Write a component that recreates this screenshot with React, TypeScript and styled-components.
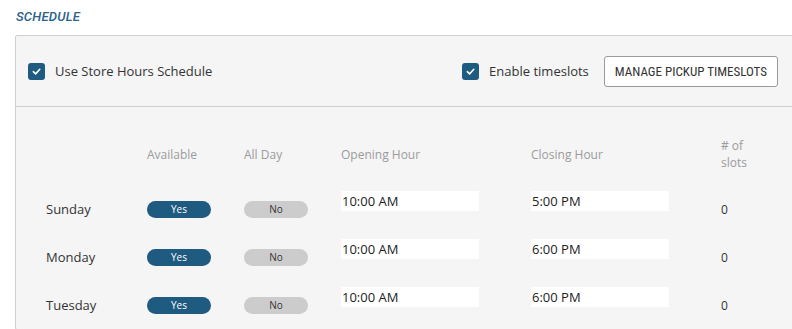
import styled, { createGlobalStyle } from 'styled-components';

const GlobalStyle = createGlobalStyle`
	body {
		margin: 0;
		background: #ffffff;
		font-family: 'Open Sans', 'Noto Sans', sans-serif;
		color: #333333;
	}
`;

const Page = styled.div`
	width: 792px;
	height: 329px;
	overflow: hidden;
	padding: 9px 0 0 15px;
	box-sizing: border-box;
`;

const SectionTitle = styled.h2`
	margin: 0 0 11px 1px;
	font-family: Roboto, 'Liberation Sans', sans-serif;
	font-size: 13px;
	font-weight: 500;
	font-style: italic;
	letter-spacing: 0.2px;
	line-height: 15px;
	color: #2a6289;
`;

const Panel = styled.div`
	width: 800px;
	background: #f5f5f5;
	border: 1px solid #cfcfcf;
	border-radius: 2px;
`;

const TopBar = styled.div`
	height: 70px;
	display: flex;
	align-items: center;
	padding: 0 0 0 12px;
	border-bottom: 1px solid #cfcfcf;
`;

const CheckLabel = styled.label<{ $push?: boolean }>`
	display: flex;
	align-items: center;
	gap: 10px;
	font-size: 13px;
	color: #333333;
	margin-left: ${(p) => (p.$push ? 'auto' : '0')};
`;

const Box = styled.span`
	width: 17px;
	height: 17px;
	border-radius: 3px;
	background: #1f5a80;
	display: flex;
	align-items: center;
	justify-content: center;
`;

const ManageButton = styled.button`
	margin: 0 38px 0 15px;
	height: 31px;
	padding: 0 10px;
	background: #ffffff;
	border: 1px solid #9a9a9a;
	border-radius: 3px;
	font-family: 'Roboto Condensed', 'Liberation Sans Narrow', Roboto, sans-serif;
	font-size: 13px;
	font-weight: 400;
	color: #333333;
`;

const Table = styled.div`
	display: grid;
	grid-template-columns: 101px 97px 97px 190px 190px 1fr;
	grid-auto-rows: 48px;
	padding: 30px 0 0 30px;
`;

const Row = styled.div`
	display: contents;
`;

const HeadCell = styled.div`
	height: 34px;
	display: flex;
	align-items: center;
	font-size: 12px;
	line-height: 17px;
	color: #9b9b9b;
`;

const DayCell = styled.div`
	align-self: center;
	font-size: 13px;
	color: #333333;
`;

const Pill = styled.span<{ $on?: boolean }>`
	align-self: center;
	width: 64px;
	height: 17px;
	border-radius: 9px;
	background: ${(p) => (p.$on ? '#1f5a80' : '#cccccc')};
	color: ${(p) => (p.$on ? '#ffffff' : '#333333')};
	font-size: 10px;
	line-height: 17px;
	text-align: center;
`;

const TimeInput = styled.div`
	align-self: start;
	margin-top: 6px;
	width: 138px;
	height: 20px;
	background: #ffffff;
	font-size: 13px;
	line-height: 20px;
	color: #222222;
	padding-left: 1px;
	box-sizing: border-box;
`;

const SlotCell = styled.div`
	align-self: center;
	font-size: 12px;
	color: #333333;
`;

const Check = () => (
	<Box>
		<svg width="11" height="11" viewBox="0 0 12 12" fill="none">
			<path d="M2.5 6.2 L5 8.6 L9.6 3.6" stroke="#fff" strokeWidth="1.7" strokeLinecap="round" strokeLinejoin="round" />
		</svg>
	</Box>
);

const days = [
	{ name: 'Sunday', open: '10:00 AM', close: '5:00 PM', slots: 0 },
	{ name: 'Monday', open: '10:00 AM', close: '6:00 PM', slots: 0 },
	{ name: 'Tuesday', open: '10:00 AM', close: '6:00 PM', slots: 0 },
];

const App = () => (
	<Page>
		<GlobalStyle />
		<SectionTitle>SCHEDULE</SectionTitle>
		<Panel>
			<TopBar>
				<CheckLabel>
					<Check />
					Use Store Hours Schedule
				</CheckLabel>
				<CheckLabel $push>
					<Check />
					Enable timeslots
				</CheckLabel>
				<ManageButton>MANAGE PICKUP TIMESLOTS</ManageButton>
			</TopBar>

			<Table>
				<Row>
					<HeadCell />
					<HeadCell>Available</HeadCell>
					<HeadCell>All Day</HeadCell>
					<HeadCell>Opening Hour</HeadCell>
					<HeadCell>Closing Hour</HeadCell>
					<HeadCell>
						<span>
							# of
							<br />
							slots
						</span>
					</HeadCell>
				</Row>
				{days.map((day) => (
					<Row key={day.name}>
						<DayCell>{day.name}</DayCell>
						<Pill $on>Yes</Pill>
						<Pill>No</Pill>
						<TimeInput>{day.open}</TimeInput>
						<TimeInput>{day.close}</TimeInput>
						<SlotCell>{day.slots}</SlotCell>
					</Row>
				))}
			</Table>
		</Panel>
	</Page>
);

export default App;
